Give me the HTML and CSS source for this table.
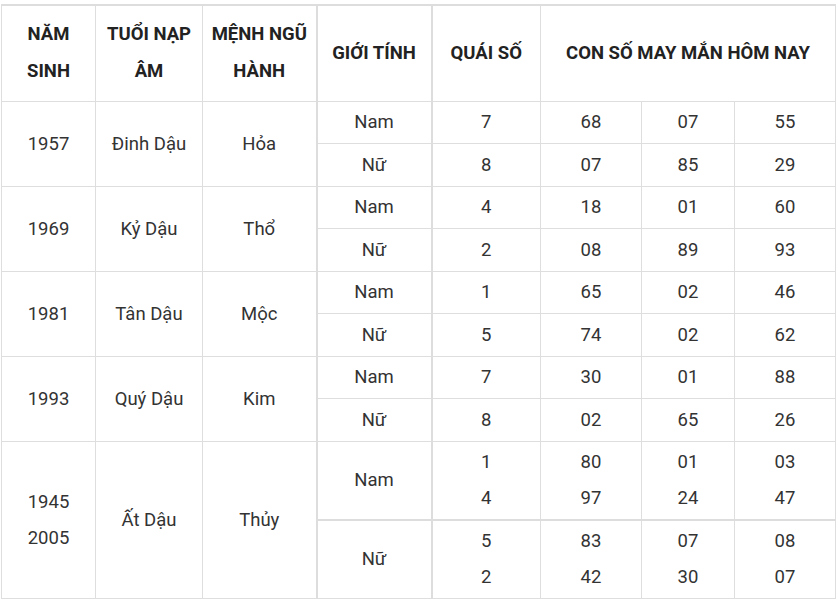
FILE: index.html
```html
<!DOCTYPE html>
<html lang="vi">
<head>
<meta charset="utf-8">
<title>Con số may mắn</title>
<link rel="stylesheet" href="styles.css">
</head>
<body>
<table class="lucky">
  <colgroup>
    <col class="c1"><col class="c2"><col class="c3"><col class="c4">
    <col class="c5"><col class="c6"><col class="c7"><col class="c8">
  </colgroup>
  <thead>
    <tr class="head">
      <th>NĂM<br>SINH</th>
      <th>TUỔI NẠP<br>ÂM</th>
      <th>MỆNH NGŨ<br>HÀNH</th>
      <th class="thick-l">GIỚI TÍNH</th>
      <th class="thick-l">QUÁI SỐ</th>
      <th colspan="3">CON SỐ MAY MẮN HÔM NAY</th>
    </tr>
  </thead>
  <tbody>
    <tr class="r42">
      <td rowspan="2">1957</td><td rowspan="2">Đinh Dậu</td><td rowspan="2">Hỏa</td>
      <td class="thick-l">Nam</td><td class="thick-l">7</td><td>68</td><td>07</td><td>55</td>
    </tr>
    <tr class="r43">
      <td class="thick-l">Nữ</td><td class="thick-l">8</td><td>07</td><td>85</td><td>29</td>
    </tr>
    <tr class="r42">
      <td rowspan="2">1969</td><td rowspan="2">Kỷ Dậu</td><td rowspan="2">Thổ</td>
      <td class="thick-l">Nam</td><td class="thick-l">4</td><td>18</td><td>01</td><td>60</td>
    </tr>
    <tr class="r43">
      <td class="thick-l">Nữ</td><td class="thick-l">2</td><td>08</td><td>89</td><td>93</td>
    </tr>
    <tr class="r42">
      <td rowspan="2">1981</td><td rowspan="2">Tân Dậu</td><td rowspan="2">Mộc</td>
      <td class="thick-l">Nam</td><td class="thick-l">1</td><td>65</td><td>02</td><td>46</td>
    </tr>
    <tr class="r43">
      <td class="thick-l">Nữ</td><td class="thick-l">5</td><td>74</td><td>02</td><td>62</td>
    </tr>
    <tr class="r42">
      <td rowspan="2">1993</td><td rowspan="2">Quý Dậu</td><td rowspan="2">Kim</td>
      <td class="thick-l">Nam</td><td class="thick-l">7</td><td>30</td><td>01</td><td>88</td>
    </tr>
    <tr class="r43">
      <td class="thick-l">Nữ</td><td class="thick-l">8</td><td>02</td><td>65</td><td>26</td>
    </tr>
    <tr class="r79">
      <td rowspan="2">1945<br>2005</td><td rowspan="2">Ất Dậu</td><td rowspan="2">Thủy</td>
      <td class="thick-l">Nam</td><td class="thick-l">1<br>4</td><td>80<br>97</td><td>01<br>24</td><td>03<br>47</td>
    </tr>
    <tr class="r78 thick-t">
      <td class="thick-l">Nữ</td><td class="thick-l">5<br>2</td><td>83<br>42</td><td>07<br>30</td><td>08<br>07</td>
    </tr>
  </tbody>
</table>
</body>
</html>
```

FILE: styles.css
```css
html, body {
  margin: 0;
  padding: 0;
  background: #ffffff;
}

body {
  font-family: Roboto, "Liberation Sans", Arial, sans-serif;
  color: #333333;
}

.lucky {
  border-collapse: collapse;
  table-layout: fixed;
  width: 835px;
  margin: 4px 0 0 1px;
  font-size: 18.5px;
}

.c1 { width: 94px; }
.c2 { width: 107px; }
.c3 { width: 114px; }
.c4 { width: 115px; }
.c5 { width: 109px; }
.c6 { width: 101px; }
.c7 { width: 93px; }
.c8 { width: 101px; }

.lucky th,
.lucky td {
  border: 1px solid #dedede;
  text-align: center;
  vertical-align: middle;
  padding: 0 2px;
  line-height: 36px;
  overflow: hidden;
  white-space: nowrap;
}

.lucky th {
  font-weight: 700;
  color: #222222;
  line-height: 37px;
}

.lucky thead th {
  border-top: 2px solid #dddddd;
}

.lucky .thick-l {
  border-left: 2px solid #dddddd;
}

.lucky .thick-t td {
  border-top: 2px solid #dddddd;
}

.head { height: 96px; }
.r42 { height: 42px; }
.r43 { height: 43px; }
.r79 { height: 79px; }
.r78 { height: 78px; }
```
